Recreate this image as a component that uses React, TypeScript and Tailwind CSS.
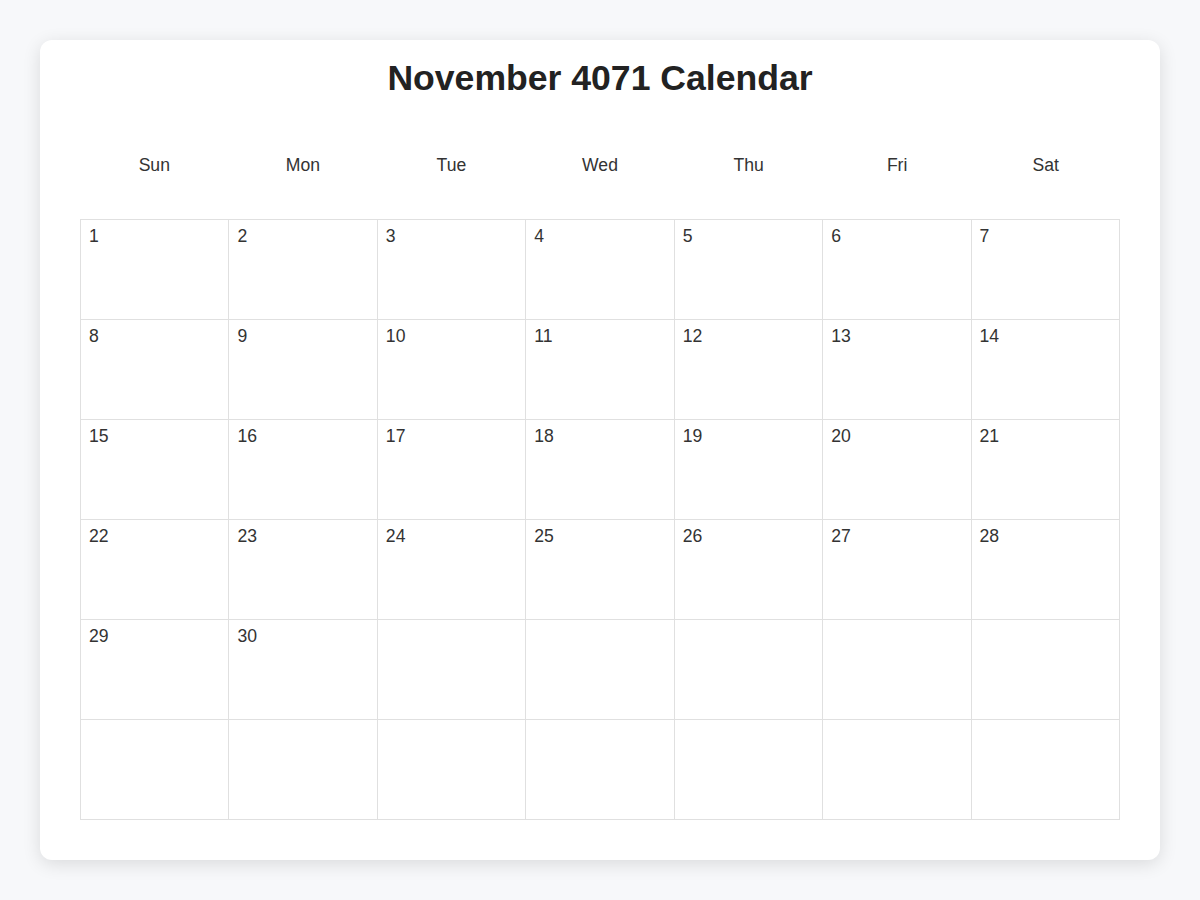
const days = ["Sun", "Mon", "Tue", "Wed", "Thu", "Fri", "Sat"]

const cells: (number | null)[] = Array.from({ length: 42 }, (_, i) => (i < 30 ? i + 1 : null))

export default function App() {
  return (
    <div className="min-h-[900px] w-full bg-[#f7f8fa] p-10 font-['Liberation_Sans',Arial,sans-serif] text-[#333]">
      <div className="rounded-xl bg-white px-10 pt-[18px] pb-10 shadow-[0_4px_18px_rgba(0,0,0,0.12)]">
        <h1 className="text-center text-[35.6px] leading-[40px] font-bold text-[#222]">November 4071 Calendar</h1>

        <div className="mt-5 grid grid-cols-7">
          {days.map((d) => (
            <div key={d} className="py-[37px] text-center text-[17.6px] leading-[20px]">
              {d}
            </div>
          ))}
        </div>

        <div className="mt-[7px] grid grid-cols-7 border-t border-l border-[#e0e0e0]">
          {cells.map((n, i) => (
            <div key={i} className="h-[100px] border-r border-b border-[#e0e0e0] p-2 text-[17.6px] leading-[16px]">
              {n}
            </div>
          ))}
        </div>
      </div>
    </div>
  )
}
